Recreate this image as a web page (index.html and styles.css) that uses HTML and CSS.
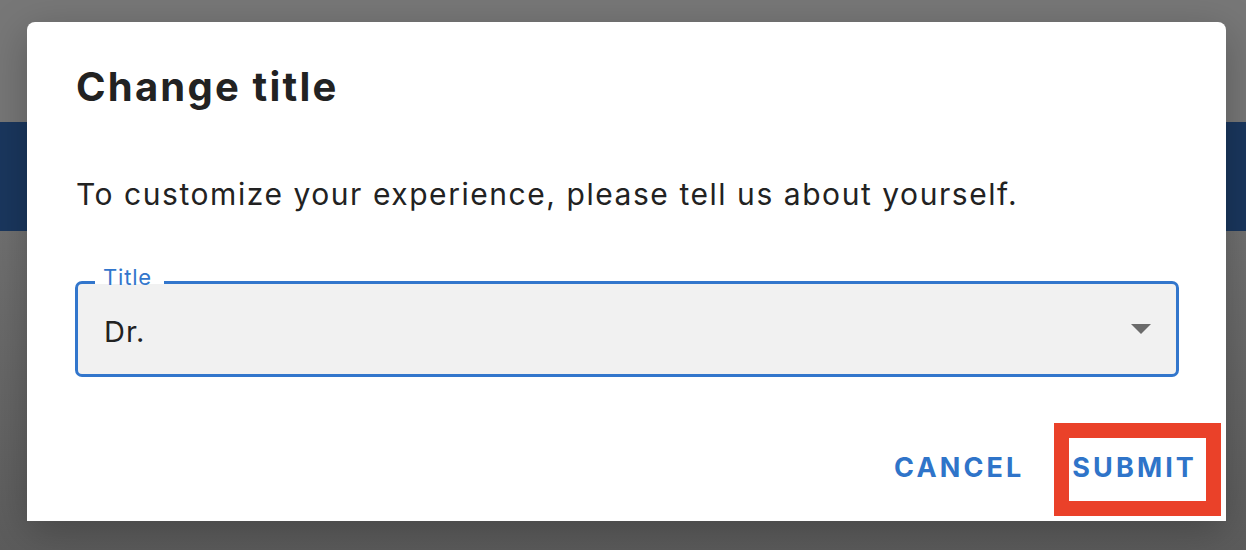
FILE: index.html
```html
<!DOCTYPE html>
<html lang="en">
<head>
<meta charset="utf-8">
<title>Change title</title>
<link rel="stylesheet" href="styles.css">
</head>
<body>
<div class="page">
  <div class="page-top"></div>
  <div class="page-band"></div>
  <div class="page-rest"></div>
</div>
<div class="dialog" role="dialog" aria-labelledby="dlg-title">
  <div class="dialog-content">
    <h2 class="dialog-title" id="dlg-title">Change title</h2>
    <p class="dialog-text">To customize your experience, please tell us about yourself.</p>
    <div class="field">
      <span class="field-label">Title</span>
      <span class="field-value">Dr.</span>
      <svg class="field-arrow" width="20" height="10" viewBox="0 0 20 10"><path d="M0 0H20L10 10Z" fill="#6b6b6b"/></svg>
    </div>
  </div>
  <div class="actions">
    <button class="btn">CANCEL</button>
    <button class="btn btn-submit">SUBMIT</button>
  </div>
</div>
<div class="highlight"></div>
</body>
</html>
```

FILE: styles.css
```css
html, body {
  margin: 0;
  padding: 0;
}
body {
  width: 1246px;
  height: 550px;
  overflow: hidden;
  position: relative;
  font-family: Inter, "Open Sans", sans-serif;
  background: #6a6a6a;
}
.page {
  display: flex;
  flex-direction: column;
  height: 550px;
}
.page-top {
  height: 122px;
  background: #777777;
}
.page-band {
  height: 109px;
  background: #1a375e;
}
.page-rest {
  flex: 1;
  background: linear-gradient(180deg, #707070 0%, #5c5c5c 100%);
}
.dialog {
  position: absolute;
  left: 27px;
  top: 22px;
  width: 1199px;
  height: 499px;
  box-sizing: border-box;
  background: #ffffff;
  border-radius: 8px 8px 0 0;
  box-shadow: 0 11px 40px rgba(0,0,0,0.25);
  display: flex;
  flex-direction: column;
}
.dialog-content {
  padding: 0 47px 0 48px;
  display: flex;
  flex-direction: column;
}
.dialog-title {
  margin: 39px 0 0 1px;
  font-size: 40px;
  line-height: 52px;
  font-weight: 700;
  color: #222222;
  letter-spacing: 2.2px;
}
.dialog-text {
  margin: 61px 0 0 1px;
  font-size: 30px;
  line-height: 40px;
  color: #222222;
  letter-spacing: 1.55px;
}
.field {
  position: relative;
  margin-top: 67px;
  height: 96px;
  box-sizing: border-box;
  border: 3px solid #3276cc;
  border-radius: 7px;
  background: #f1f1f1;
  display: flex;
  align-items: center;
  justify-content: space-between;
  padding: 0 25px 0 26px;
}
.field-label {
  position: absolute;
  left: 17px;
  top: -20px;
  padding: 0 12px 0 8px;
  font-size: 22px;
  line-height: 26px;
  color: #3276cc;
  letter-spacing: 0.8px;
  background: linear-gradient(180deg, #ffffff 0%, #ffffff 77%, #f1f1f1 77%, #f1f1f1 100%);
}
.field-value {
  font-size: 29px;
  color: #222222;
  letter-spacing: 1px;
  margin-top: 4px;
}
.field-arrow {
  display: block;
}
.actions {
  margin-top: auto;
  display: flex;
  justify-content: flex-end;
  gap: 35px;
  padding: 0 20px 20px 0;
}
.btn {
  border: 0;
  background: #ffffff;
  padding: 0 9px 4px 4px;
  height: 63px;
  font-family: Inter, "Open Sans", sans-serif;
  font-size: 27px;
  line-height: 36px;
  font-weight: 700;
  color: #2f74c9;
  letter-spacing: 3.1px;
  cursor: pointer;
}
.highlight {
  position: absolute;
  left: 1054px;
  top: 423px;
  width: 167px;
  height: 93px;
  box-sizing: border-box;
  border: 15px solid #ea4129;
}
```
